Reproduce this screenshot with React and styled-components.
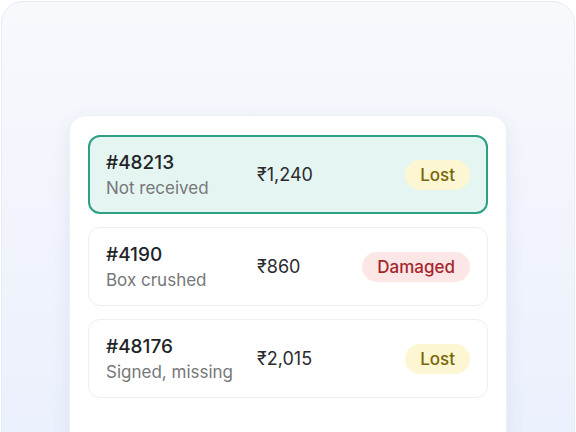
import React from 'react';
import styled, { createGlobalStyle } from 'styled-components';

const GlobalStyle = createGlobalStyle`
  html, body {
    margin: 0;
    padding: 0;
    height: 100%;
    overflow: hidden;
  }
  body {
    font-family: Inter, "Noto Sans", sans-serif;
    background: #ffffff;
  }
`;

const Frame = styled.div`
  box-sizing: border-box;
  margin: 1px;
  width: 574px;
  height: 460px;
  border: 1px solid #e7ebf4;
  border-radius: 22px;
  background: linear-gradient(180deg, #f7f9fd 0%, #f1f4fc 50%, #eaf0fd 100%);
  padding: 113px 0 0 67px;
`;

const Card = styled.div`
  box-sizing: border-box;
  width: 438px;
  background: #ffffff;
  border: 1px solid #eceff5;
  border-radius: 16px;
  box-shadow: 0 6px 18px rgba(90, 110, 170, 0.1);
  padding: 19px 18px 60px;
  display: flex;
  flex-direction: column;
  gap: 13px;
`;

const Row = styled.div`
  box-sizing: border-box;
  display: grid;
  grid-template-columns: 151px 1fr auto;
  align-items: center;
  height: 79px;
  border-radius: 12px;
  border: ${({ $active }) => ($active ? '2px solid #2c9f85' : '1px solid #eceef2')};
  background: ${({ $active }) => ($active ? '#e5f5f1' : '#ffffff')};
  padding: ${({ $active }) => ($active ? '0 16px' : '0 17px')};
`;

const Info = styled.div`
  display: flex;
  flex-direction: column;
  gap: 2px;
`;

const OrderId = styled.div`
  font-size: 19px;
  line-height: 25px;
  font-weight: 500;
  color: #222428;
`;

const Reason = styled.div`
  font-size: 17px;
  line-height: 23px;
  color: #767779;
`;

const Price = styled.div`
  font-size: 18px;
  line-height: 24px;
  color: #2a2b2e;
`;

const badgeColors = {
  lost: { bg: '#fdf6d2', fg: '#76670c' },
  damaged: { bg: '#fde6e6', fg: '#a3272b' },
};

const Badge = styled.span`
  display: inline-flex;
  align-items: center;
  height: 30px;
  padding: 0 15px;
  border-radius: 15px;
  font-size: 17px;
  font-weight: 500;
  background: ${({ $kind }) => badgeColors[$kind].bg};
  color: ${({ $kind }) => badgeColors[$kind].fg};
`;

const claims = [
  { id: '#48213', reason: 'Not received', price: '₹1,240', status: 'Lost', kind: 'lost', active: true },
  { id: '#4190', reason: 'Box crushed', price: '₹860', status: 'Damaged', kind: 'damaged' },
  { id: '#48176', reason: 'Signed, missing', price: '₹2,015', status: 'Lost', kind: 'lost' },
];

export default function App() {
  return (
    <>
      <GlobalStyle />
      <Frame>
        <Card>
          {claims.map((c) => (
            <Row key={c.id} $active={c.active}>
              <Info>
                <OrderId>{c.id}</OrderId>
                <Reason>{c.reason}</Reason>
              </Info>
              <Price>{c.price}</Price>
              <Badge $kind={c.kind}>{c.status}</Badge>
            </Row>
          ))}
        </Card>
      </Frame>
    </>
  );
}
